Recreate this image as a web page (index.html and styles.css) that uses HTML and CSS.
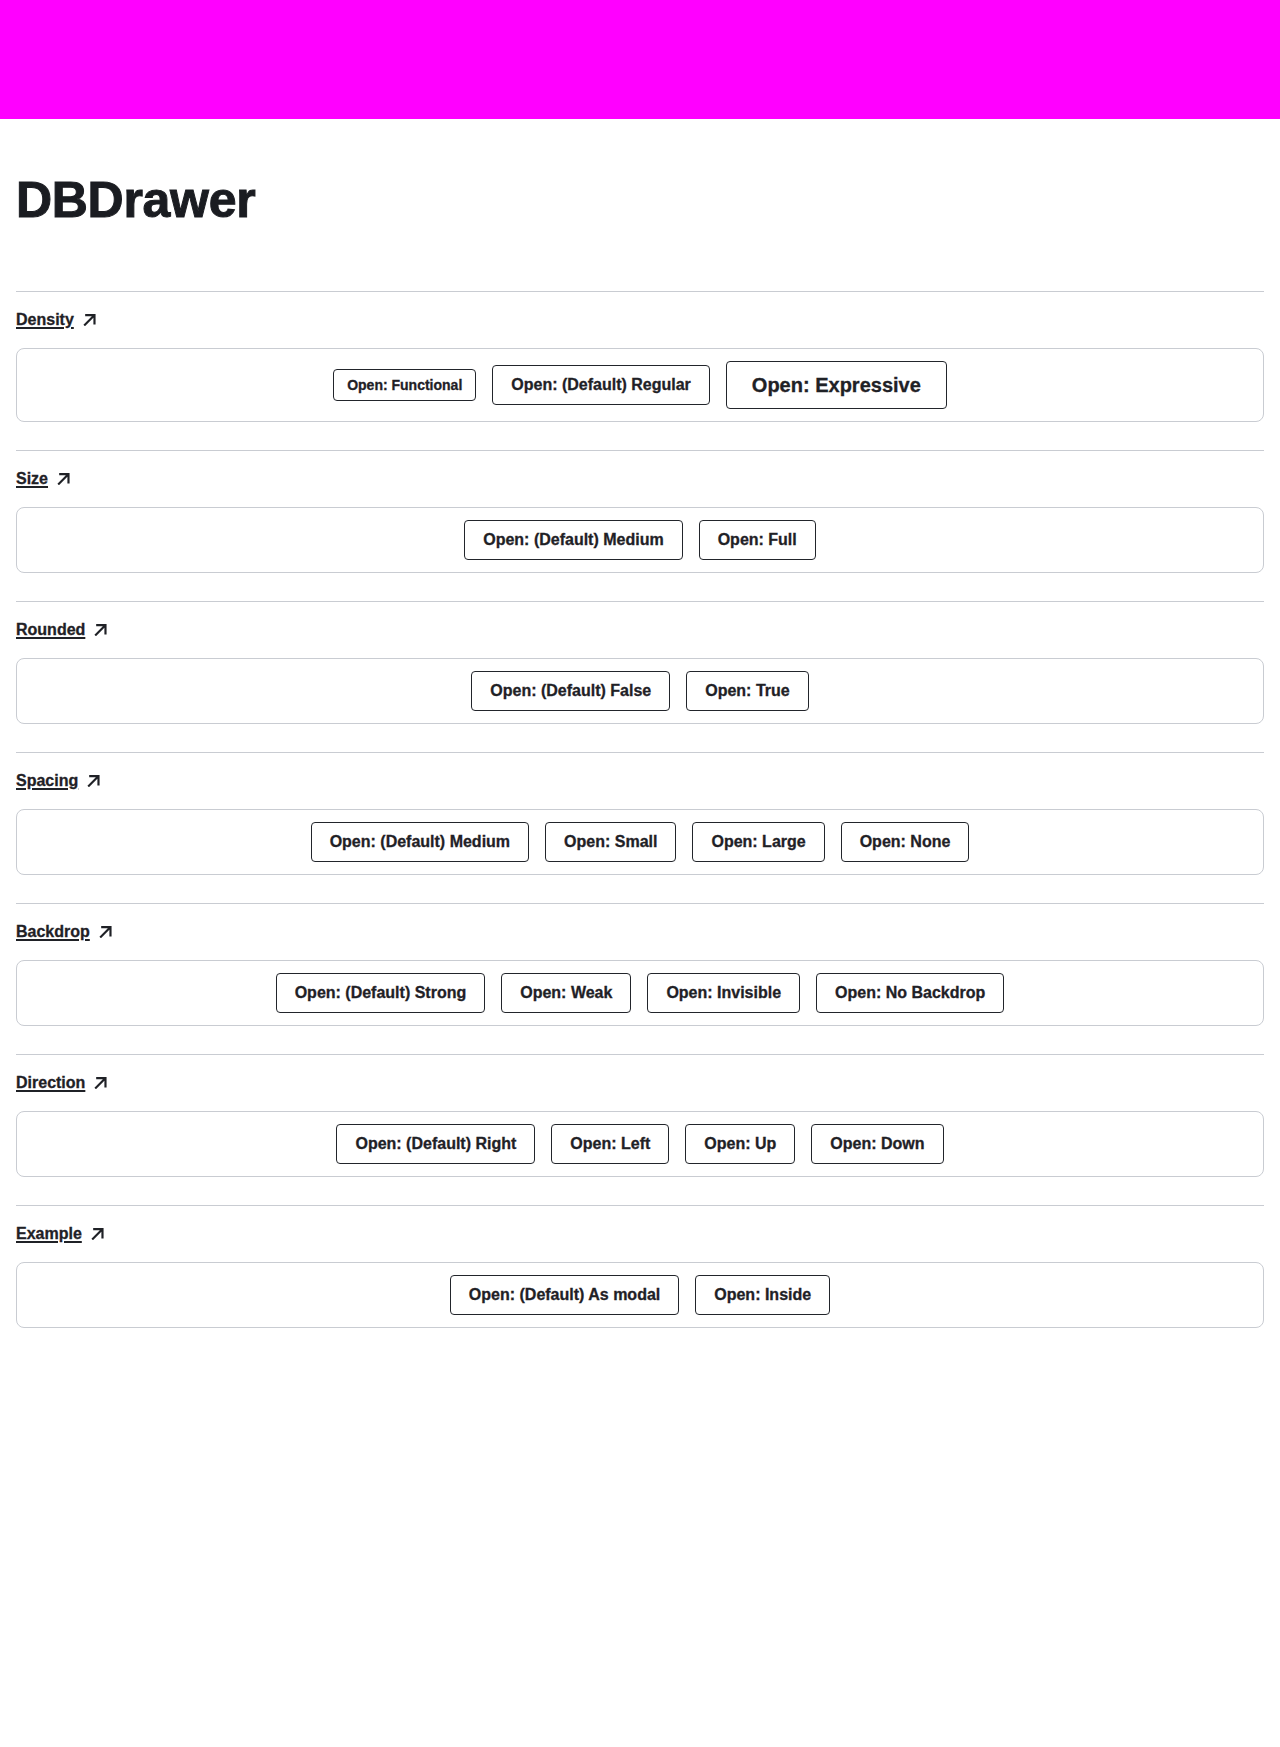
FILE: index.html
```html
<!DOCTYPE html>
<html lang="en">
<head>
<meta charset="utf-8">
<title>DBDrawer</title>
<link rel="stylesheet" href="styles.css">
</head>
<body>
<header class="top-bar"></header>
<main class="page">
  <h1 class="page-title">DBDrawer</h1>

  <section class="variant">
    <a class="variant-link" href="#density">Density<svg class="ext-icon" viewBox="0 0 12 12" aria-hidden="true"><path d="M1.8 10.8 L10 2.6 M3 2 H10.6 V9.6"/></svg></a>
    <div class="demo-card">
      <button class="btn btn-sm">Open: Functional</button>
      <button class="btn">Open: (Default) Regular</button>
      <button class="btn btn-lg">Open: Expressive</button>
    </div>
  </section>

  <section class="variant">
    <a class="variant-link" href="#size">Size<svg class="ext-icon" viewBox="0 0 12 12" aria-hidden="true"><path d="M1.8 10.8 L10 2.6 M3 2 H10.6 V9.6"/></svg></a>
    <div class="demo-card">
      <button class="btn">Open: (Default) Medium</button>
      <button class="btn">Open: Full</button>
    </div>
  </section>

  <section class="variant">
    <a class="variant-link" href="#rounded">Rounded<svg class="ext-icon" viewBox="0 0 12 12" aria-hidden="true"><path d="M1.8 10.8 L10 2.6 M3 2 H10.6 V9.6"/></svg></a>
    <div class="demo-card">
      <button class="btn">Open: (Default) False</button>
      <button class="btn">Open: True</button>
    </div>
  </section>

  <section class="variant">
    <a class="variant-link" href="#spacing">Spacing<svg class="ext-icon" viewBox="0 0 12 12" aria-hidden="true"><path d="M1.8 10.8 L10 2.6 M3 2 H10.6 V9.6"/></svg></a>
    <div class="demo-card">
      <button class="btn">Open: (Default) Medium</button>
      <button class="btn">Open: Small</button>
      <button class="btn">Open: Large</button>
      <button class="btn">Open: None</button>
    </div>
  </section>

  <section class="variant">
    <a class="variant-link" href="#backdrop">Backdrop<svg class="ext-icon" viewBox="0 0 12 12" aria-hidden="true"><path d="M1.8 10.8 L10 2.6 M3 2 H10.6 V9.6"/></svg></a>
    <div class="demo-card">
      <button class="btn">Open: (Default) Strong</button>
      <button class="btn">Open: Weak</button>
      <button class="btn">Open: Invisible</button>
      <button class="btn">Open: No Backdrop</button>
    </div>
  </section>

  <section class="variant">
    <a class="variant-link" href="#direction">Direction<svg class="ext-icon" viewBox="0 0 12 12" aria-hidden="true"><path d="M1.8 10.8 L10 2.6 M3 2 H10.6 V9.6"/></svg></a>
    <div class="demo-card">
      <button class="btn">Open: (Default) Right</button>
      <button class="btn">Open: Left</button>
      <button class="btn">Open: Up</button>
      <button class="btn">Open: Down</button>
    </div>
  </section>

  <section class="variant">
    <a class="variant-link" href="#example">Example<svg class="ext-icon" viewBox="0 0 12 12" aria-hidden="true"><path d="M1.8 10.8 L10 2.6 M3 2 H10.6 V9.6"/></svg></a>
    <div class="demo-card">
      <button class="btn">Open: (Default) As modal</button>
      <button class="btn">Open: Inside</button>
    </div>
  </section>
</main>
</body>
</html>
```

FILE: styles.css
```css
* {
  box-sizing: border-box;
}

html, body {
  margin: 0;
  padding: 0;
  background: #ffffff;
}

body {
  font-family: "Liberation Sans", Arial, sans-serif;
  color: #1f2126;
}

.top-bar {
  height: 119px;
  background: #ff00ff;
}

.page {
  padding: 0 16px;
}

.page-title {
  margin: 51px 0 61px;
  font-size: 50px;
  line-height: 60px;
  font-weight: 700;
  color: #1a1c21;
  -webkit-text-stroke: 1px #1a1c21;
  letter-spacing: -0.3px;
}

.variant {
  border-top: 1px solid #c9ccd2;
  padding: 16px 0 28px;
  display: flex;
  flex-direction: column;
  align-items: flex-start;
  gap: 16px;
}

.variant-link {
  display: inline-flex;
  align-items: center;
  font-size: 16px;
  line-height: 24px;
  font-weight: 700;
  color: #1f2126;
  -webkit-text-stroke: 0.3px #1f2126;
  text-decoration: underline;
  text-decoration-thickness: 1.5px;
  text-underline-offset: 2px;
}

.ext-icon {
  width: 13px;
  height: 13px;
  margin-left: 9px;
  margin-top: -2px;
  fill: none;
  stroke: #1f2126;
  stroke-width: 2;
  stroke-linecap: square;
}

.demo-card {
  align-self: stretch;
  border: 1px solid #c9ccd2;
  border-radius: 8px;
  padding: 12px;
  display: flex;
  justify-content: center;
  align-items: center;
  gap: 16px;
}

.btn {
  display: inline-flex;
  align-items: center;
  justify-content: center;
  height: 40px;
  padding: 0 18px;
  border: 1px solid #22252b;
  border-radius: 4px;
  background: #ffffff;
  color: #1f2126;
  font-family: "Liberation Sans", Arial, sans-serif;
  font-size: 16px;
  font-weight: 700;
  line-height: 1;
  -webkit-text-stroke: 0.3px #1f2126;
  white-space: nowrap;
  cursor: pointer;
}

.btn-sm {
  height: 32px;
  padding: 0 13px;
  font-size: 14px;
}

.btn-lg {
  height: 48px;
  padding: 0 25px;
  font-size: 20px;
}
```
